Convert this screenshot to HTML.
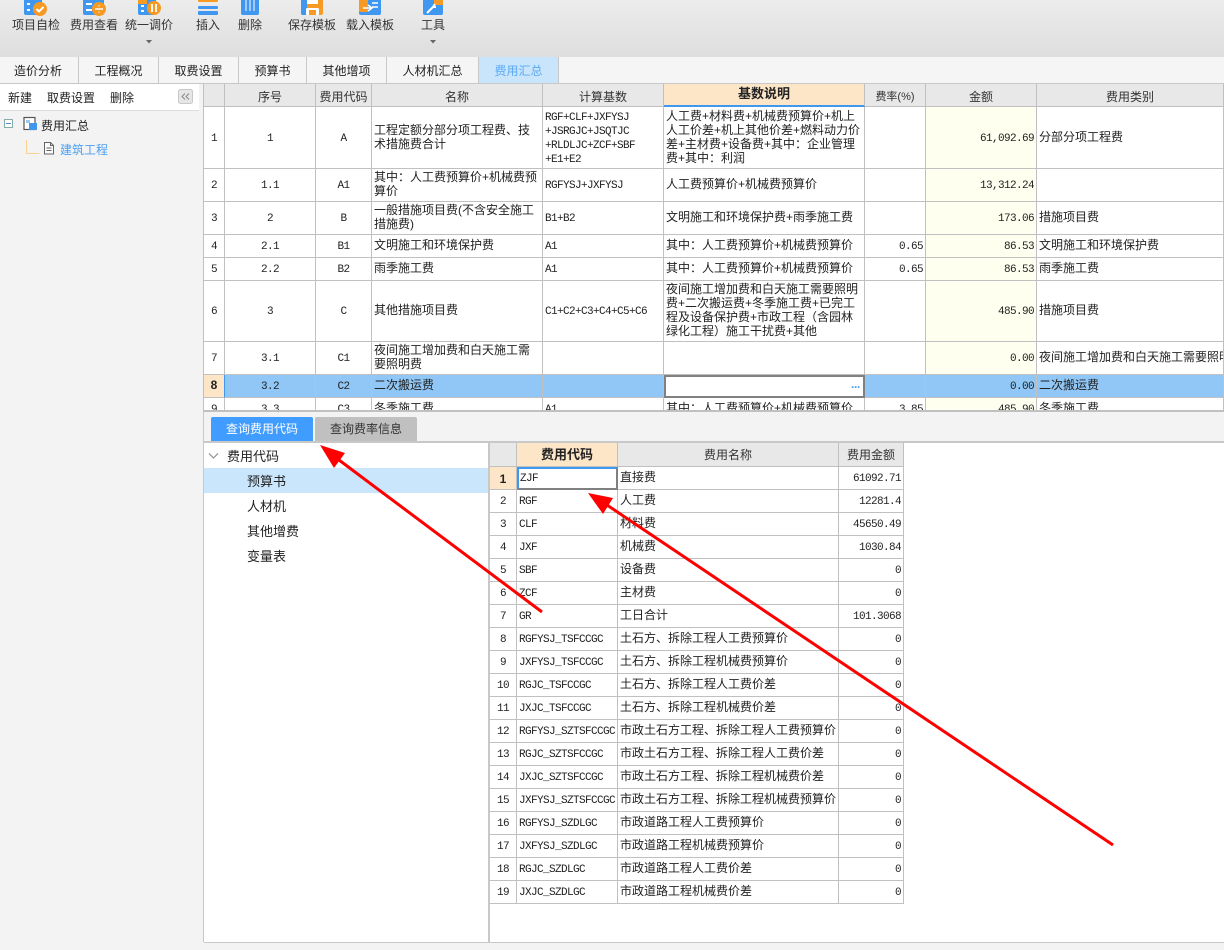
<!DOCTYPE html>
<html lang="zh"><head><meta charset="utf-8"><title>费用汇总</title>
<style>
html,body{margin:0;padding:0;width:1224px;height:950px;overflow:hidden;background:#f3f3f3}
body{position:relative;font:12px/14px "Liberation Sans","Noto Sans CJK SC",sans-serif;color:#222}
.a{position:absolute;white-space:nowrap}
#bar{left:0;top:0;width:1224px;height:57px;background:linear-gradient(#ececec,#dedede)}
.lb{top:18px;height:14px;width:70px;text-align:center;color:#333}
.tab{top:57px;height:26px;line-height:28px;text-align:center;background:#f5f5f5;border-right:1px solid #c8c8c8;box-sizing:border-box}
table{border-collapse:separate;border-spacing:0;table-layout:fixed}
td{border-right:1px solid #c0c0c0;border-bottom:1px solid #c0c0c0;padding:0 2px 2px;white-space:nowrap;overflow:hidden;background:#fff;box-sizing:border-box;vertical-align:middle;line-height:14px;color:#222}
.h td{background:#e8e8e8;text-align:center;color:#333;padding:3px 2px 0}
.h2 td{padding:0 2px}
td.act{background:#fde5c8;font-weight:bold;font-size:13px;text-align:center;color:#222}
.c{text-align:center}
.r{text-align:right}
td.m{font-family:"Liberation Mono","Noto Sans CJK SC",monospace;font-size:11px;letter-spacing:-.6px;padding:2px 2px 0}
td.y{background:#fffff0}
.sel td{background:#90c7f6}
td.rh{background:#fde5c8;font-weight:bold;text-align:center;font-size:12px}
</style></head><body>

<div class="a" id="bar"></div>
<svg class="a" style="left:0;top:0" width="470" height="18">
<rect x="24" y="-6" width="18" height="21" rx="2" fill="#3f97f0"/><rect x="27" y="3" width="3" height="2" fill="#fff"/><rect x="27" y="9" width="3" height="2" fill="#fff"/><circle cx="40" cy="9" r="7" fill="#f79a24"/><path d="M36.5 9l2.5 2.5 4.5-4.5" stroke="#fff" stroke-width="2" fill="none"/>
<rect x="83" y="-6" width="21" height="21" rx="2" fill="#3f97f0"/><rect x="86" y="3" width="6" height="2" fill="#fff"/><rect x="86" y="9" width="6" height="2" fill="#fff"/><circle cx="99" cy="9" r="7" fill="#f79a24"/><path d="M95 9h8M99 5.5v.8M99 11.7v.8" stroke="#fff" stroke-width="1.6"/>
<rect x="138" y="-6" width="18" height="21" rx="2" fill="#3f97f0"/><rect x="138" y="-6" width="9" height="10" fill="#f79a24"/><rect x="141" y="5" width="3" height="2" fill="#fff"/><rect x="141" y="10" width="3" height="2" fill="#fff"/><circle cx="154" cy="8" r="7" fill="#f79a24"/><path d="M152 4v8M156 4v8" stroke="#fff" stroke-width="1.8"/>
<rect x="198" y="-2" width="20" height="4" rx="1" fill="#f79a24"/><rect x="198" y="6" width="20" height="3" rx="1" fill="#3f97f0"/><rect x="198" y="11" width="20" height="4" rx="1" fill="#3f97f0"/>
<rect x="241" y="-6" width="18" height="21" rx="2" fill="#3f97f0"/><path d="M246 0v11M250 0v11M254 0v11" stroke="#fff" stroke-width="1"/>
<rect x="301" y="-6" width="22" height="21" rx="2" fill="#f79a24"/><rect x="301" y="-6" width="6" height="21" rx="2" fill="#3f97f0"/><rect x="307" y="0" width="11" height="4" fill="#fff"/><rect x="306" y="8" width="13" height="7" rx="1" fill="#fff"/><rect x="309" y="10" width="7" height="5" fill="#f79a24"/>
<rect x="359" y="-6" width="22" height="21" rx="2" fill="#3f97f0"/><rect x="359" y="-6" width="9" height="18" rx="1" fill="#f79a24"/><path d="M363 8h8M368 5l4 3-4 3M372 3h6M372 7h6" stroke="#fff" stroke-width="1.5" fill="none"/>
<rect x="423" y="-6" width="20" height="21" rx="2" fill="#3f97f0"/><rect x="434" y="-6" width="9" height="11" fill="#f79a24"/><path d="M427 13l6-6M433 7l2-3M433 7l3 0" stroke="#fff" stroke-width="2" fill="none"/>
</svg>
<div class="a lb" style="left:1px">项目自检</div>
<div class="a lb" style="left:59px">费用查看</div>
<div class="a lb" style="left:114px">统一调价</div>
<div class="a lb" style="left:173px">插入</div>
<div class="a lb" style="left:215px">删除</div>
<div class="a lb" style="left:277px">保存模板</div>
<div class="a lb" style="left:335px">载入模板</div>
<div class="a lb" style="left:398px">工具</div>
<svg class="a" style="left:0;top:38px" width="450" height="8"><path d="M146 2h6l-3 3.5zM430 2h6l-3 3.5z" fill="#666"/></svg>

<div class="a tab" style="left:0;width:79px;padding-right:2px">造价分析</div>
<div class="a tab" style="left:79px;width:80px">工程概况</div>
<div class="a tab" style="left:159px;width:80px">取费设置</div>
<div class="a tab" style="left:239px;width:68px">预算书</div>
<div class="a tab" style="left:307px;width:80px">其他增项</div>
<div class="a tab" style="left:387px;width:92px">人材机汇总</div>
<div class="a tab" style="left:479px;width:80px;background:#c9e5fb;color:#5aa9f5">费用汇总</div>
<div class="a" style="left:559px;top:57px;width:665px;height:26px;background:#f5f5f5"></div>
<div class="a" style="left:0;top:83px;width:1224px;height:1px;background:#c8c8c8"></div>

<!-- left panel -->
<div class="a" style="left:0;top:84px;width:199px;height:26px;background:#fff;border-bottom:1px solid #dcdcdc"></div>
<div class="a" style="left:8px;top:91px">新建</div>
<div class="a" style="left:47px;top:91px">取费设置</div>
<div class="a" style="left:110px;top:91px">删除</div>
<svg class="a" style="left:178px;top:89px" width="15" height="15"><rect x=".5" y=".5" width="14" height="14" rx="2" fill="#e6e6e6" stroke="#c8c8c8"/><path d="M7 4.5L4 7.5l3 3M11 4.5L8 7.5l3 3" stroke="#888" fill="none"/></svg>
<svg class="a" style="left:0;top:112px" width="60" height="46">
<rect x="4.5" y="7.5" width="8" height="8" fill="#fff" stroke="#8aa"/><path d="M6 11.500h5" stroke="#4a86c8"/>
<rect x="24" y="5.500" width="11" height="12" fill="#fff" stroke="#555" stroke-width="1.2"/><rect x="29" y="11" width="8" height="7" fill="#3f97f0"/><rect x="26" y="8" width="4" height="3" fill="#9cc8f0"/>
<path d="M26.500 41V35.500M26.500 35.500v6h13" stroke="#fbd090" stroke-width="1" fill="none"/><path d="M26.500 28v8" stroke="#fbd090"/>
<path d="M44.500 30.500h6l3 3v8.500h-9zM50.500 30.500v3h3M46.500 36h5M46.500 38.500h5" stroke="#666" fill="#fafafa"/>
</svg>
<div class="a" style="left:41px;top:119px">费用汇总</div>
<div class="a" style="left:60px;top:143px;color:#4a9ff5">建筑工程</div>

<!-- top grid -->
<div class="a" style="left:203px;top:84px;width:1021px;height:326px;overflow:hidden;border-left:1px solid #c0c0c0;box-sizing:border-box;background:#fff">
<table style="width:1020px">
<colgroup><col style="width:21px"><col style="width:91px"><col style="width:56px"><col style="width:171px"><col style="width:121px"><col style="width:201px"><col style="width:61px"><col style="width:111px"><col style="width:187px"></colgroup>
<tr class="h" style="height:23px"><td></td><td>序号</td><td>费用代码</td><td>名称</td><td>计算基数</td><td class="act" style="border-bottom:2px solid #3f97f0;padding:0 2px 1px">基数说明</td><td style="font-size:11px">费率(%)</td><td>金额</td><td>费用类别</td></tr>
<tr style="height:62px"><td class="m c">1</td><td class="m c">1</td><td class="m c">A</td><td>工程定额分部分项工程费、技<br>术措施费合计</td><td class="m">RGF+CLF+JXFYSJ<br>+JSRGJC+JSQTJC<br>+RLDLJC+ZCF+SBF<br>+E1+E2</td><td>人工费+材料费+机械费预算价+机上<br>人工价差+机上其他价差+燃料动力价<br>差+主材费+设备费+其中：企业管理<br>费+其中：利润</td><td></td><td class="m r y">61,092.69</td><td>分部分项工程费</td></tr>
<tr style="height:33px"><td class="m c">2</td><td class="m c">1.1</td><td class="m c">A1</td><td>其中：人工费预算价+机械费预<br>算价</td><td class="m">RGFYSJ+JXFYSJ</td><td>人工费预算价+机械费预算价</td><td></td><td class="m r y">13,312.24</td><td></td></tr>
<tr style="height:33px"><td class="m c">3</td><td class="m c">2</td><td class="m c">B</td><td>一般措施项目费(不含安全施工<br>措施费)</td><td class="m">B1+B2</td><td>文明施工和环境保护费+雨季施工费</td><td></td><td class="m r y">173.06</td><td>措施项目费</td></tr>
<tr style="height:23px"><td class="m c">4</td><td class="m c">2.1</td><td class="m c">B1</td><td>文明施工和环境保护费</td><td class="m">A1</td><td>其中：人工费预算价+机械费预算价</td><td class="m r">0.65</td><td class="m r y">86.53</td><td>文明施工和环境保护费</td></tr>
<tr style="height:23px"><td class="m c">5</td><td class="m c">2.2</td><td class="m c">B2</td><td>雨季施工费</td><td class="m">A1</td><td>其中：人工费预算价+机械费预算价</td><td class="m r">0.65</td><td class="m r y">86.53</td><td>雨季施工费</td></tr>
<tr style="height:61px"><td class="m c">6</td><td class="m c">3</td><td class="m c">C</td><td>其他措施项目费</td><td class="m">C1+C2+C3+C4+C5+C6</td><td>夜间施工增加费和白天施工需要照明<br>费+二次搬运费+冬季施工费+已完工<br>程及设备保护费+市政工程（含园林<br>绿化工程）施工干扰费+其他</td><td></td><td class="m r y">485.90</td><td>措施项目费</td></tr>
<tr style="height:33px"><td class="m c">7</td><td class="m c">3.1</td><td class="m c">C1</td><td>夜间施工增加费和白天施工需<br>要照明费</td><td></td><td></td><td></td><td class="m r y">0.00</td><td>夜间施工增加费和白天施工需要照明费</td></tr>
<tr class="sel" style="height:23px"><td class="rh" style="background:#fde5c8;border-right:1px solid #3f97f0">8</td><td class="m c">3.2</td><td class="m c">C2</td><td>二次搬运费</td><td></td><td style="background:#fff;border:2px solid #808080;text-align:right;color:#4a9ff5;font-weight:bold;line-height:14px;padding:1px 3px 0 2px;letter-spacing:-1px">···</td><td></td><td class="m r">0.00</td><td>二次搬运费</td></tr>
<tr style="height:23px"><td class="m c">9</td><td class="m c">3.3</td><td class="m c">C3</td><td>冬季施工费</td><td class="m">A1</td><td>其中：人工费预算价+机械费预算价</td><td class="m r">3.85</td><td class="m r y">485.90</td><td>冬季施工费</td></tr>
</table>
</div>
<div class="a" style="left:203px;top:410px;width:1021px;height:2px;background:#c0c0c0"></div>

<!-- bottom -->
<div class="a" style="left:203px;top:412px;width:1px;height:530px;background:#c8c8c8"></div>
<div class="a" style="left:211px;top:417px;width:102px;height:24px;line-height:25px;text-align:center;background:#409dff;color:#fff;border-radius:2px 2px 0 0">查询费用代码</div>
<div class="a" style="left:315px;top:417px;width:102px;height:24px;line-height:25px;text-align:center;background:#c0c0c0;color:#333;border-radius:2px 2px 0 0">查询费率信息</div>
<div class="a" style="left:204px;top:441px;width:1020px;height:2px;background:#c8c8c8"></div>
<div class="a" style="left:204px;top:443px;width:1020px;height:499px;background:#fff"></div>
<div class="a" style="left:204px;top:468px;width:284px;height:25px;background:#cae6fd"></div>
<svg class="a" style="left:208px;top:452px" width="12" height="8"><path d="M1 1.500l4.500 4.500L10 1.500" stroke="#999" stroke-width="1.300" fill="none"/></svg>
<div class="a" style="left:227px;top:450px;font-size:13px">费用代码</div>
<div class="a" style="left:247px;top:475px;font-size:13px">预算书</div>
<div class="a" style="left:247px;top:500px;font-size:13px">人材机</div>
<div class="a" style="left:247px;top:525px;font-size:13px">其他增费</div>
<div class="a" style="left:247px;top:550px;font-size:13px">变量表</div>
<div class="a" style="left:488px;top:443px;width:2px;height:499px;background:#c8c8c8"></div>

<div class="a" style="left:490px;top:443px;width:414px;background:#fff">
<table style="width:414px">
<colgroup><col style="width:27px"><col style="width:101px"><col style="width:221px"><col style="width:65px"></colgroup>
<tr class="h h2" style="height:24px"><td></td><td class="act">费用代码</td><td>费用名称</td><td>费用金额</td></tr>
<tr style="height:23px"><td class="rh" style="padding:2px 2px 0">1</td><td class="m" style="border:2px solid #808080;border-left-color:#3f97f0;border-top-color:#3f97f0;padding:0 2px 0 1px">ZJF</td><td>直接费</td><td class="m r">61092.71</td></tr>
<tr style="height:23px"><td class="m c">2</td><td class="m">RGF</td><td>人工费</td><td class="m r">12281.4</td></tr>
<tr style="height:23px"><td class="m c">3</td><td class="m">CLF</td><td>材料费</td><td class="m r">45650.49</td></tr>
<tr style="height:23px"><td class="m c">4</td><td class="m">JXF</td><td>机械费</td><td class="m r">1030.84</td></tr>
<tr style="height:23px"><td class="m c">5</td><td class="m">SBF</td><td>设备费</td><td class="m r">0</td></tr>
<tr style="height:23px"><td class="m c">6</td><td class="m">ZCF</td><td>主材费</td><td class="m r">0</td></tr>
<tr style="height:23px"><td class="m c">7</td><td class="m">GR</td><td>工日合计</td><td class="m r">101.3068</td></tr>
<tr style="height:23px"><td class="m c">8</td><td class="m">RGFYSJ_TSFCCGC</td><td>土石方、拆除工程人工费预算价</td><td class="m r">0</td></tr>
<tr style="height:23px"><td class="m c">9</td><td class="m">JXFYSJ_TSFCCGC</td><td>土石方、拆除工程机械费预算价</td><td class="m r">0</td></tr>
<tr style="height:23px"><td class="m c">10</td><td class="m">RGJC_TSFCCGC</td><td>土石方、拆除工程人工费价差</td><td class="m r">0</td></tr>
<tr style="height:23px"><td class="m c">11</td><td class="m">JXJC_TSFCCGC</td><td>土石方、拆除工程机械费价差</td><td class="m r">0</td></tr>
<tr style="height:23px"><td class="m c">12</td><td class="m">RGFYSJ_SZTSFCCGC</td><td>市政土石方工程、拆除工程人工费预算价</td><td class="m r">0</td></tr>
<tr style="height:23px"><td class="m c">13</td><td class="m">RGJC_SZTSFCCGC</td><td>市政土石方工程、拆除工程人工费价差</td><td class="m r">0</td></tr>
<tr style="height:23px"><td class="m c">14</td><td class="m">JXJC_SZTSFCCGC</td><td>市政土石方工程、拆除工程机械费价差</td><td class="m r">0</td></tr>
<tr style="height:23px"><td class="m c">15</td><td class="m">JXFYSJ_SZTSFCCGC</td><td>市政土石方工程、拆除工程机械费预算价</td><td class="m r">0</td></tr>
<tr style="height:23px"><td class="m c">16</td><td class="m">RGFYSJ_SZDLGC</td><td>市政道路工程人工费预算价</td><td class="m r">0</td></tr>
<tr style="height:23px"><td class="m c">17</td><td class="m">JXFYSJ_SZDLGC</td><td>市政道路工程机械费预算价</td><td class="m r">0</td></tr>
<tr style="height:23px"><td class="m c">18</td><td class="m">RGJC_SZDLGC</td><td>市政道路工程人工费价差</td><td class="m r">0</td></tr>
<tr style="height:23px"><td class="m c">19</td><td class="m">JXJC_SZDLGC</td><td>市政道路工程机械费价差</td><td class="m r">0</td></tr>
</table>
</div>
<div class="a" style="left:204px;top:942px;width:1020px;height:1px;background:#c8c8c8"></div>

<svg class="a" style="left:0;top:0;pointer-events:none" width="1224" height="950">
<path d="M542 612L335 457M1113 845L604 503" stroke="#f00" stroke-width="3" fill="none"/>
<path d="M320 445L345 453L334 468Z" fill="#f00"/>
<path d="M588 493L613 498L603 514Z" fill="#f00"/>
</svg>
</body></html>
